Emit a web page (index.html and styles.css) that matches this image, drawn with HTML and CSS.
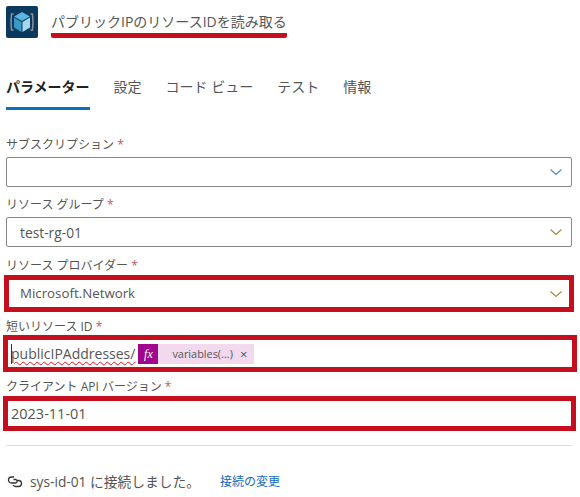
FILE: index.html
```html
<!DOCTYPE html>
<html lang="ja">
<head>
    <meta charset="UTF-8">
    <title>パブリックIPのリソースIDを読み取る</title>
    <link rel="stylesheet" href="styles.css">
</head>
<body>
    <!-- Header -->
    <div class="header">
        <div class="logo">
            <svg width="32" height="32" viewBox="0 0 32 32">
                <rect width="32" height="32" rx="2" fill="#0b3a5e"/>
                <path d="M7.500 8H5.500Q4.500 16 5.500 24H7.500" fill="none" stroke="#8f9397" stroke-width="1.500"/>
                <path d="M24.500 8H26.500Q27.500 16 26.500 24H24.500" fill="none" stroke="#8f9397" stroke-width="1.500"/>
                <path d="M16 6L24 10.500L16 15L8 10.500Z" fill="#59b4e0"/>
                <path d="M8 11.500L15.500 16V26L8 21.500Z" fill="#3999c6"/>
                <path d="M24 11.500L16.500 16V26L24 21.500Z" fill="#a5d8ee"/>
            </svg>
        </div>
        <h1 class="title">パブリックIPのリソースIDを読み取る</h1>
    </div>

    <!-- Tabs -->
    <div class="tabs">
        <span class="tab active">パラメーター</span>
        <span class="tab">設定</span>
        <span class="tab">コード ビュー</span>
        <span class="tab">テスト</span>
        <span class="tab">情報</span>
    </div>

    <!-- Form -->
    <form class="form">
        <label class="label label-first">サブスクリプション <i>*</i></label>
        <div class="field">
            <svg class="chevron" width="12" height="6" viewBox="0 0 12 6"><path d="M0.500 0.500L6 5.500L11.500 0.500" fill="none" stroke="#4f86b8" stroke-width="1.100"/></svg>
        </div>

        <label class="label label-group">リソース グループ <i>*</i></label>
        <div class="field">
            <span class="value-group">test-rg-01</span>
            <svg class="chevron" width="12" height="6" viewBox="0 0 12 6"><path d="M0.500 0.500L6 5.500L11.500 0.500" fill="none" stroke="#a5803f" stroke-width="1.100"/></svg>
        </div>

        <label class="label label-provider">リソース プロバイダー <i>*</i></label>
        <div class="field marked marked-provider">
            <span class="value-provider">Microsoft.Network</span>
            <svg class="chevron" width="12" height="6" viewBox="0 0 12 6"><path d="M0.500 0.500L6 5.500L11.500 0.500" fill="none" stroke="#a5803f" stroke-width="1.100"/></svg>
        </div>

        <label class="label label-short">短いリソース ID <i>*</i></label>
        <div class="field marked marked-input">
            <span class="caret"></span>
            <span class="squiggle">publicIPAddresses/</span>
            <span class="token">
                <span class="token-icon">fx</span>
                <span class="token-text">variables(...)</span>
                <span class="token-close">×</span>
            </span>
        </div>

        <label class="label label-api">クライアント API バージョン <i>*</i></label>
        <div class="field marked marked-version">
            <span>2023-11-01</span>
        </div>
    </form>

    <hr class="divider">

    <!-- Connection -->
    <div class="connection">
        <svg width="16" height="12" viewBox="0 0 16 12"><path d="M7 1H4.500A3 3 0 0 0 4.500 7H9A2 2 0 0 0 9 3.500H6.500M9.500 4.500H11.500A3 3 0 0 1 11.500 10.500H8.500A3 3 0 0 1 6 9" fill="none" stroke="#333" stroke-width="1.300"/></svg>
        <span class="connection-text">sys-id-01 に接続しました。</span>
        <a class="connection-link" href="#">接続の変更</a>
    </div>
</body>
</html>
```

FILE: styles.css
```css
body {
    font-family: "Open Sans", "Noto Sans CJK JP", sans-serif;
    margin: 0;
    width: 580px;
    height: 497px;
    overflow: hidden;
    background-color: #fff;
    color: #323130;
}

.header {
    display: flex;
    align-items: flex-start;
    padding: 6px 0 0 6px;
}

.logo {
    display: flex;
    width: 32px;
    height: 32px;
}

.title {
    margin: 5px 0 0 13px;
    border-bottom: 5px solid #c50f1f;
    border-radius: 2px;
    font-size: 14px;
    font-weight: 400;
    line-height: 22px;
    color: #555;
}

.tabs {
    display: flex;
    gap: 24px;
    margin: 39px 0 0 6px;
}

.tab {
    height: 30px;
    font-size: 14px;
    line-height: 20px;
    color: #555;
}

.tab.active {
    border-bottom: 3px solid #106ebe;
    font-weight: 600;
    color: #222;
}

.form {
    display: flex;
    flex-direction: column;
    margin-top: 26px;
}

.label {
    margin-left: 6px;
    font-size: 12px;
    line-height: 17px;
    color: #555;
}

.label i {
    font-style: normal;
    color: #c4565b;
}

.label-first { margin-bottom: 4px; }
.label-group { margin-top: 9px; margin-bottom: 4px; }
.label-provider { margin-top: 10px; margin-bottom: 1px; }
.label-short { margin-top: 6px; }
.label-api { margin-top: 6px; margin-bottom: 1px; }

.field {
    box-sizing: border-box;
    display: flex;
    align-items: center;
    width: 566px;
    height: 30px;
    margin-left: 6px;
    padding-left: 13px;
    border: 1px solid #8a8886;
    border-radius: 2px;
    font-size: 13.300px;
    color: #555;
}

.value-group {
    font-size: 13.800px;
}

.value-provider {
    margin-top: -2px;
}

.chevron {
    margin-left: auto;
    margin-right: 9px;
}

.marked {
    border: 5px solid #c50f1f;
    border-radius: 0;
}

.marked-provider {
    width: 570px;
    height: 37px;
    margin-left: 4px;
    padding-left: 11px;
}

.marked-provider .chevron {
    margin-right: 7px;
}

.marked-input {
    width: 574px;
    height: 37px;
    margin-left: 3px;
    padding-left: 3px;
    font-size: 14px;
}

.marked-version {
    width: 573px;
    height: 35px;
    margin-left: 3px;
    padding-left: 3px;
    font-size: 14.500px;
}

.caret {
    width: 1px;
    height: 20px;
    margin-right: -1px;
    background-color: #333;
}

.squiggle {
    text-decoration: underline wavy #e81123 1px;
    text-underline-offset: 2px;
}

.token {
    display: flex;
    align-items: center;
    width: 116px;
    height: 20px;
    margin-left: 3px;
    background-color: #f2d9ee;
    font-size: 10.900px;
}

.token-icon {
    width: 20px;
    height: 20px;
    background-color: #a1068e;
    color: #fff;
    font-family: "Liberation Serif", serif;
    font-style: italic;
    font-size: 12px;
    line-height: 20px;
    text-align: center;
}

.token-text {
    margin-left: 14px;
}

.token-close {
    margin-left: 7px;
    font-size: 13px;
}

.divider {
    width: 566px;
    height: 1px;
    margin: 14px 0 0 6px;
    border: 0;
    background-color: #ddd;
}

.connection {
    display: flex;
    align-items: center;
    margin: 27px 0 0 7px;
    font-size: 12px;
    line-height: 18px;
}

.connection-text {
    margin-left: 7px;
    font-size: 13.750px;
    color: #555;
}

.connection-link {
    margin-left: 20px;
    color: #0f6cbd;
    text-decoration: none;
}
```
